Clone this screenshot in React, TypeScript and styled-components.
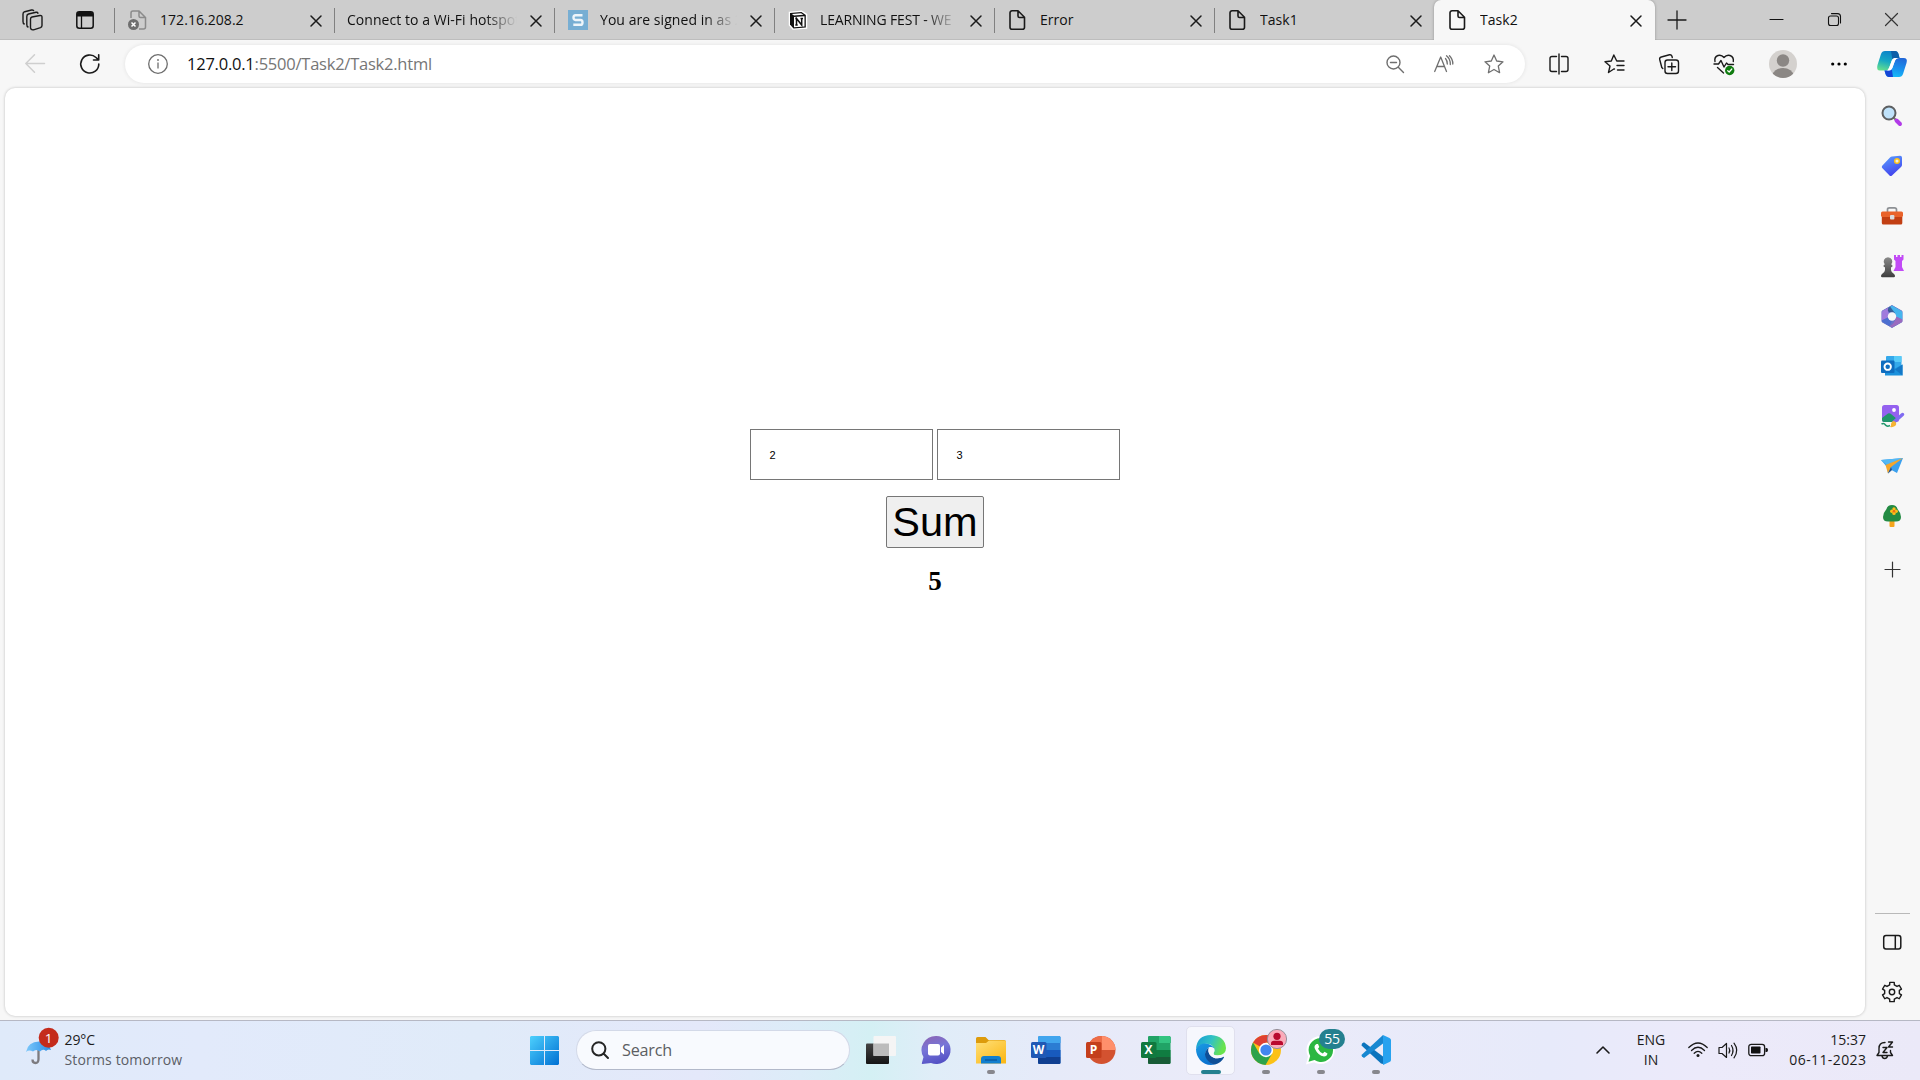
import React from 'react';
import styled, { createGlobalStyle } from 'styled-components';

const GlobalStyle = createGlobalStyle`
  * { box-sizing: border-box; }
  body { margin: 0; background: #f6f6f6; overflow: hidden; }
  svg { display: block; flex: none; overflow: visible; }
`;

const ui = `"Open Sans", "Noto Sans", sans-serif`;

const Screen = styled.div`
  width: 1920px;
  height: 1080px;
  display: flex;
  flex-direction: column;
  font-family: ${ui};
  color: #1b1b1b;
  background: #f7f7f7;
  overflow: hidden;
`;

/* ---------- tab strip ---------- */
const TabStrip = styled.div`
  height: 40px;
  flex: none;
  display: flex;
  background: #cdcdcd;
  box-shadow: inset 0 -1px 0 #bdbdbd;
`;
const StripTools = styled.div`
  width: 114px;
  display: flex;
  align-items: center;
  padding-left: 22px;
  gap: 33px;
`;
const Tab = styled.div<{ $active?: boolean; $bare?: boolean }>`
  width: ${p => (p.$active ? 221 : 220)}px;
  height: 40px;
  display: flex;
  align-items: center;
  padding: 0 ${p => (p.$active ? 13 : 12)}px 0 ${p => (p.$bare ? 13 : 14)}px;
  background: ${p => (p.$active ? '#f7f7f7' : 'linear-gradient(#808080,#808080) 0 8px / 1px 25px no-repeat')};
  ${p => (p.$active ? 'border-radius: 7px 7px 0 0; box-shadow: 0 0 3px rgba(0,0,0,.3); clip-path: inset(0 -4px 0 -4px);' : '')}
`;
const Favicon = styled.div`
  width: 20px;
  height: 20px;
  margin-right: 12px;
`;
const TabTitle = styled.div<{ $fade?: boolean; $tight?: boolean }>`
  flex: 1;
  overflow: hidden;
  white-space: nowrap;
  font-size: 14px;
  line-height: 20px;
  letter-spacing: ${p => (p.$tight ? -0.16 : 0.05)}px;
  color: #101010;
  margin-right: 13px;
  margin-top: -1px;
  ${p => (p.$fade ? 'mask-image: linear-gradient(90deg, #000 calc(100% - 32px), transparent 100%);' : '')}
`;
const CloseSlot = styled.div`
  width: 12px;
  margin: 1px 0 0;
`;
const NewTab = styled.div`
  width: 44px;
  display: grid;
  place-items: center;
`;
const WindowButtons = styled.div`
  margin-left: auto;
  display: flex;
  align-items: center;
  gap: 44.5px;
  padding: 0 22px 1px 0;
`;

/* ---------- toolbar ---------- */
const Toolbar = styled.div`
  height: 48px;
  flex: none;
  display: flex;
  align-items: flex-start;
  padding-top: 5px;
`;
const NavButtons = styled.div`
  width: 125px;
  height: 38px;
  display: flex;
  align-items: center;
  gap: 35px;
  padding-left: 25px;
`;
const Omnibox = styled.div`
  width: 1400px;
  height: 38px;
  border-radius: 19px;
  background: #fff;
  box-shadow: 0 0 4px rgba(0, 0, 0, 0.09);
  display: flex;
  align-items: center;
  padding: 0 21px 0 23px;
`;
const Url = styled.div`
  margin: -1px auto 0 19px;
  font-size: 16.5px;
  line-height: 24px;
  letter-spacing: -0.23px;
  color: #767676;
  white-space: nowrap;
  b { color: #111; font-weight: 400; }
`;
const OmniIcons = styled.div`
  display: flex;
  align-items: center;
  gap: 30px;
`;
const ToolIcons = styled.div`
  height: 38px;
  display: flex;
  align-items: center;
  padding-left: 24px;
  gap: 35px;
`;
const Avatar = styled.div`
  width: 28px;
  height: 28px;
  margin: 0 -1px 0 0;
`;
const MenuSlot = styled.div`
  margin-left: 0;
`;
const CopilotSlot = styled.div`
  margin-left: -5px;
`;

/* ---------- middle ---------- */
const Middle = styled.div`
  height: 932px;
  flex: none;
  display: flex;
  padding-left: 5px;
`;
const Page = styled.main`
  width: 1860px;
  height: 928px;
  background: #fff;
  border-radius: 10px;
  box-shadow: 0 0 3px rgba(0, 0, 0, 0.24);
  display: flex;
  flex-direction: column;
  align-items: center;
  padding-top: 341px;
`;
const Inputs = styled.div`
  display: flex;
  gap: 4px;
`;
const NumberField = styled.div`
  width: 183px;
  height: 51px;
  border: 1px solid #767676;
  padding-left: 18.500px;
  font: 11px/51px "Liberation Sans", Arial, sans-serif;
  color: #000;
`;
const SumButton = styled.button`
  width: 98px;
  height: 52px;
  margin: 16px 0 0;
  padding: 0 0 1px;
  border: 1px solid #767676;
  border-radius: 2px;
  background: #efefef;
  color: #000;
  font: 41.5px/47px "Liberation Sans", Arial, sans-serif;
`;
const Result = styled.h2`
  margin: 18px 0 0;
  font: bold 27px/31px "Liberation Serif", "Times New Roman", serif;
  color: #000;
`;
const Sidebar = styled.aside`
  width: 54px;
  display: flex;
  flex-direction: column;
  align-items: center;
  padding: 2px 0 3px;
`;
const SideItem = styled.div<{ $h?: number }>`
  height: ${p => p.$h ?? 50}px;
  display: grid;
  place-items: center;
`;
const SideRule = styled.div`
  width: 35px;
  height: 1px;
  margin-top: auto;
  margin-bottom: 3px;
  background: #b9b9b9;
`;

/* ---------- taskbar ---------- */
const Taskbar = styled.footer`
  height: 60px;
  flex: none;
  display: flex;
  border-top: 1px solid #b6b8c4;
  background: linear-gradient(90deg, #dfeafa 0, #e2eafb 200px, #e0ebf9 480px, #e4e8fa 700px, #dcecf8 800px, #d4f0f4 870px, #e0edf8 935px, #e6eaf9 1050px, #ebebf9 1250px, #e7eafa 1550px, #eceafa 1700px, #ebe9f8 100%);
`;
const Weather = styled.div`
  width: 517px;
  display: flex;
  padding: 9px 0 0 26px;
`;
const WeatherText = styled.div`
  margin-left: 9.5px;
  font-size: 14px;
  line-height: 20px;
  letter-spacing: 0.15px;
  color: #5b5e66;
  b { display: block; font-weight: 400; color: #1b1b1b; letter-spacing: -0.1px; }
`;
const StartSlot = styled.div`
  width: 59px;
  padding: 15px 0 0 13px;
`;
const SearchBox = styled.div`
  width: 274px;
  height: 40px;
  margin-top: 9px;
  border-radius: 20px;
  background: #f8fafe;
  border: 1px solid #d3d9e8;
  border-bottom-color: #b2b9ca;
  display: flex;
  align-items: center;
  padding-left: 14px;
  gap: 13px;
  font-size: 16.2px;
  color: #5c5e62;
  letter-spacing: -0.2px;
`;
const Apps = styled.div`
  display: flex;
  margin-left: 3px;
`;
const AppCell = styled.div<{ $active?: boolean }>`
  width: 49px;
  height: 49px;
  margin: 5px 3px 0;
  padding-top: 8px;
  display: flex;
  flex-direction: column;
  align-items: center;
  justify-content: space-between;
  border-radius: 5px;
  border: 1px solid ${p => (p.$active ? '#e0e0ee' : 'transparent')};
  background: ${p => (p.$active ? '#f6f7fd' : 'transparent')};
`;
const Indicator = styled.div<{ $kind?: 'run' | 'focus' }>`
  width: ${p => (p.$kind === 'focus' ? 20 : 8)}px;
  height: 4px;
  border-radius: 2px;
  background: ${p => (p.$kind === 'focus' ? '#24808f' : p.$kind ? '#87878d' : 'transparent')};
`;
const Tray = styled.div`
  margin-left: auto;
  display: flex;
  align-items: flex-start;
  padding: 0 26px 0 0;
`;
const TrayIcon = styled.div<{ $top: number; $gap: number }>`
  padding-top: ${p => p.$top}px;
  margin-left: ${p => p.$gap}px;
`;
const TrayText = styled.div<{ $w: number; $align: string; $gap: number }>`
  width: ${p => p.$w}px;
  margin-left: ${p => p.$gap}px;
  padding-top: 9px;
  text-align: ${p => p.$align};
  font-size: 14px;
  line-height: 20px;
  white-space: nowrap;
`;
const DateLine = styled.div`
  letter-spacing: 0.4px;
  margin-right: -0.4px;
`;

const line = (d: string, w = 20, h = 20, c = '#1a1a1a', sw = 1.4) => (
  <svg width={w} height={h} viewBox={`0 0 ${w} ${h}`} fill="none" stroke={c} strokeWidth={sw} strokeLinecap="round" strokeLinejoin="round">
    <path d={d} />
  </svg>
);

const CloseX = () => line('M1 1L11 11M11 1L1 11', 12, 12, '#1a1a1a', 1.5);
const FileIcon = () => line('M4 .8H10L16.500 7.300V17.200A2 2 0 0 1 14.500 19.200H4A2 2 0 0 1 2 17.200V2.800A2 2 0 0 1 4 .8ZM10 1V6A1.500 1.500 0 0 0 11.500 7.500H16.500', 20, 20, '#1a1a1a', 1.6);
const BrokenFile = () => (
  <svg width="20" height="20" viewBox="0 0 20 20" fill="none">
    <path d="M3 8V3A2 2 0 0 1 5 1H11L17.500 7.500V17A2 2 0 0 1 15.500 19H11M11 1V6A1.500 1.500 0 0 0 12.500 7.500H17.500" stroke="#8b8b8b" strokeWidth="1.500" />
    <circle cx="5.500" cy="14.500" r="5.500" fill="#6f6f6f" />
    <path d="M3.500 12.500L7.500 16.500M7.500 12.500L3.500 16.500" stroke="#fff" strokeWidth="1.500" />
  </svg>
);
const SIcon = () => (
  <svg width="20" height="20" viewBox="0 0 20 20">
    <rect width="20" height="20" fill="#77aed3" />
    <path d="M14.500 5.200H7.500Q5.500 5.200 5.500 7.500T7.500 10H12.500Q14.500 10 14.500 12.400T12.500 14.800H5.300" fill="none" stroke="#eef5fa" strokeWidth="2.400" />
  </svg>
);
const NotionIcon = () => (
  <svg width="20" height="20" viewBox="0 0 20 20">
    <path d="M1.500 2.500L13.500 1.200L18.500 4.500V18L5 19L1.500 15Z" fill="#fff" stroke="#fff" strokeWidth="1.500" />
    <path d="M2 3L13.500 2L17.800 5V17.600L5.500 18.500L2 14.500Z" fill="#111" />
    <path d="M3.800 3.900L13 3.200L15.500 4.800L6 5.500Z M6 7L16.500 6.200V16.500L6 17.200Z" fill="#fff" />
    <path d="M8.500 15V8.500L13.700 15V8.500M7.300 8.500H9M12.500 8.500H15M7.300 15H9.700" stroke="#111" strokeWidth="1.500" fill="none" />
  </svg>
);
const Workspaces = () => (
  <svg width="21" height="22" viewBox="0 0 21 22" fill="none" stroke="#1a1a1a" strokeWidth="1.400" strokeLinejoin="round" strokeLinecap="round">
    <path d="M10 8L18 6.500Q20 6.300 20 8.300V16.500Q20 18 18.500 18.600L11.500 20.800Q9 21.300 8.500 19V10Q8.500 8.500 10 8Z" />
    <path d="M6 18Q4.800 17.500 4.800 15.500V7.500Q4.800 5.500 6.500 5L14 3.300Q15.600 3 16 4.200" />
    <path d="M2.200 15Q1 14.500 1 12.500V5Q1 3.300 2.700 2.700L9.500 1Q11 .7 11.600 1.600" />
  </svg>
);
const TabActions = () => (
  <svg width="18" height="18" viewBox="0 0 18 18">
    <rect x=".8" y=".8" width="16.400" height="16.400" rx="2.500" fill="none" stroke="#111" strokeWidth="1.500" />
    <path d="M1 5.500V3Q1 1 3 1H15Q17 1 17 3V5.500Z" fill="#111" />
    <path d="M5.500 5V17" stroke="#111" strokeWidth="1.300" />
  </svg>
);
const starD = 'M10 1L12.700 7L19 7.800L14.300 12.100L15.600 18.700L10 15.500L4.400 18.700L5.700 12.100L1 7.800L7.300 7Z';

const SplitIcon = () => line('M10 0V20M7.500 2.500H3Q1 2.500 1 4.500V15.500Q1 17.500 3 17.500H7.500M12.500 2.500H17Q19 2.500 19 4.500V15.500Q19 17.500 17 17.500H12.500', 20, 20);
const FavIcon = () => line('M10.500 15L9.800 15L4.500 18.500L6 12L1 7.800L7.300 7L9.800 1L12.500 6.500M12.800 7H20M13 11.500H20M13.500 16H20', 20, 20);
const CollIcon = () => line('M8.500 6H17Q19.500 6 19.500 8.500V17Q19.500 19.500 17 19.500H8.500Q6 19.500 6 17V8.500Q6 6 8.500 6ZM12.800 9V16.500M9 12.800H16.500M3.800 14.500L2.800 13.500L.7 5.500Q.3 3.500 2.300 3L10.500 .8Q12.300 .4 13 2.300L13.300 3.500', 20, 20);
const HeartIcon = () => (
  <svg width="20" height="20" viewBox="0 0 20 20" fill="none" stroke="#1a1a1a" strokeWidth="1.400" strokeLinejoin="round" strokeLinecap="round">
    <path d="M1 7.500Q0 3 4 1.500Q7.500 .5 10 3.500Q12.500 .5 16 1.500Q20 3 19.300 7.500M0 10H4.500L7 6.500L10 13L12.500 9L14 10.500H19.500M3.500 13.500L9.500 19" />
    <circle cx="15.700" cy="16.500" r="4.700" fill="#107c10" stroke="none" />
    <path d="M13.700 16.700L15.200 18L17.800 15" stroke="#fff" strokeWidth="1.200" />
  </svg>
);
const AvatarIcon = () => (
  <svg width="28" height="28" viewBox="0 0 28 28">
    <defs><clipPath id="av"><circle cx="14" cy="14" r="14" /></clipPath></defs>
    <circle cx="14" cy="14" r="14" fill="#d4d1ce" />
    <circle cx="14" cy="10.500" r="6.200" fill="#8b8784" />
    <ellipse cx="14" cy="25.500" rx="10.500" ry="7.500" fill="#8b8784" clipPath="url(#av)" />
  </svg>
);
const Copilot = () => (
  <svg width="30" height="28" viewBox="0 0 30 28">
    <defs>
      <linearGradient id="cp1" x1=".5" y1="0" x2=".2" y2="1"><stop offset="0" stopColor="#0b83c9" /><stop offset=".5" stopColor="#16a8c4" /><stop offset="1" stopColor="#66e08c" /></linearGradient>
      <linearGradient id="cp2" x1=".7" y1="0" x2=".4" y2="1"><stop offset="0" stopColor="#2168d8" /><stop offset=".6" stopColor="#1896f0" /><stop offset="1" stopColor="#17bdf7" /></linearGradient>
    </defs>
    <path d="M8 1H18Q20.500 1 21.500 4L22.500 8H18Q15.500 8 14.800 10.500L12 18Q11 20.500 8 20.500H3Q-1 20.500 .5 15L4 4Q5 1 8 1Z" fill="url(#cp1)" />
    <path d="M14 1H18Q20.500 1 21.500 4L22.500 8H18Q16 8 15.400 9.500Z" fill="#0b5ea8" />
    <path d="M22 8H26.500Q31 8 29.500 13L26 24Q25 27 22 27H12Q9.500 27 8.500 24L7.500 20.500H12Q14.500 20.500 15.300 18L18 10.500Q19 8 22 8Z" fill="url(#cp2)" />
    <path d="M7.500 20.500H12Q14 20.500 14.800 19L16 27H12Q9.500 27 8.500 24Z" fill="#1546d6" />
    <path d="M17.800 8H20.500Q18.800 8.500 18 10.800L15.300 18Q14.500 20.500 12 20.500H9.500Q11.500 20 12.300 17.500L14.800 10.500Q15.500 8 17.800 8Z" fill="#fff" />
  </svg>
);

/* sidebar drawings */
const SideSearch = () => (
  <svg width="22" height="22" viewBox="0 0 22 22">
    <path d="M12.500 12.500L16 16" stroke="#777" strokeWidth="2" />
    <path d="M15.500 15.500L19 19" stroke="#b23be8" strokeWidth="4" strokeLinecap="round" />
    <circle cx="8" cy="8" r="6.500" fill="#bfe2fa" stroke="#5d5f61" strokeWidth="2" />
  </svg>
);
const SideTag = () => (
  <svg width="22" height="22" viewBox="0 0 22 22">
    <defs><linearGradient id="tg" x2=".4" y2="1"><stop stopColor="#5aa2ff" /><stop offset="1" stopColor="#4346ee" /></linearGradient></defs>
    <path d="M11 1.500L19 .8Q21 .7 21 2.700V10Q21 11 20 12L11 20.500Q9.700 21.500 8.500 20.500L1.200 13Q.2 12 1.200 10.800L9 2.500Q10 1.500 11 1.500Z" fill="url(#tg)" />
    <circle cx="16" cy="6" r="2.300" fill="#f1f0e0" stroke="#ffc217" strokeWidth="1.500" />
  </svg>
);
const SideToolbox = () => (
  <svg width="22" height="18" viewBox="0 1 22 18">
    <path d="M6.500 6V3.500Q6.500 1.800 8.500 1.800H13.500Q15.500 1.800 15.500 3.500V6" fill="none" stroke="#8d9094" strokeWidth="1.700" />
    <rect x=".8" y="10" width="20.500" height="8.500" rx="1.500" fill="#c23f13" />
    <rect x="0" y="5.500" width="22" height="5.500" rx="1.500" fill="#e9632b" />
    <rect x="9" y="9" width="4.400" height="4.500" rx="1" fill="#dadde0" />
  </svg>
);
const SideChess = () => (
  <svg width="24" height="24" viewBox="0 0 24 24">
    <defs><linearGradient id="pn" y2="1" x2="0"><stop stopColor="#8a8a8a" /><stop offset="1" stopColor="#3e3e3e" /></linearGradient></defs>
    <path d="M14 1H16V3H17.500V1H20V3H21.500V1H23.500V5.500L22 7V13L24 17H13.500L15.500 13V7L14 5.500Z" fill="#c24bf6" />
    <path d="M8 3.200A4.300 4.300 0 0 1 11.200 10.400Q12.500 10.700 12.500 12T11 13.300V16Q11 18 14 20Q15 21 15 22Q15 23.200 13.800 23.200H2.200Q1 23.200 1 22Q1 21 2 20Q5 18 5 16V13.300Q3.500 13.300 3.500 12T4.800 10.400A4.300 4.300 0 0 1 8 3.200Z" fill="url(#pn)" />
  </svg>
);
const Side365 = () => (
  <svg width="22" height="23" viewBox="0 0 22 23">
    <path d="M11 .5L21 6.200V16.800L11 22.500L1 16.800V6.200Z" fill="#6b74c8" stroke="#6b74c8" strokeLinejoin="round" />
    <path d="M11 .5L20.500 6Q21.300 6.500 21.300 7.500V14.500L15 11.500Q15 7.500 11 7.300L6 4Q9 1 11 .5Z" fill="#45b5ee" />
    <path d="M11 .5L5 4.200Q8 8 12 7.300L14.500 8.800L9 1.500Z" fill="#31477f" opacity=".75" />
    <path d="M.8 15.500V7.500Q.8 6.500 1.500 6L7.500 2.500Q6 6 8 8.500Q6.500 10 7 12.500Z" fill="#a07bdc" />
    <path d="M.8 15.500L7 12.500Q8 15.700 11 15.700L8.500 21L1.500 17Z" fill="#4c6fd0" />
    <path d="M21.300 14.500V16Q21.300 16.700 20.500 17.200L11 22.500L8.500 21Q14 19 15 11.500Z" fill="#9b6bbf" />
    <circle cx="11" cy="11.500" r="4.200" fill="#f7f7f7" />
  </svg>
);
const SideOutlook = () => (
  <svg width="22" height="22" viewBox="0 0 22 22">
    <rect x="5" y="1" width="15.500" height="15" rx="1" fill="#35a9eb" />
    <path d="M13 1H20.500V7H13Z" fill="#57cbf8" />
    <path d="M4 10L13 14L21.500 9.500V20.500H4Z" fill="#1b91dc" />
    <path d="M14 14.500L21.500 9.500V20.500Z" fill="#1478c7" />
    <rect x="0" y="5.500" width="13.500" height="12.500" rx="1" fill="#0f6dbf" />
    <circle cx="6.700" cy="11.700" r="3.200" fill="none" stroke="#fff" strokeWidth="1.900" />
  </svg>
);
const SideImage = () => (
  <svg width="24" height="24" viewBox="0 0 24 24">
    <rect x="2" y="1" width="17" height="17" rx="2.500" fill="#9461ef" />
    <path d="M2 14L8 9.500Q9.500 8.700 11 10L17 15V18H4Q2 18 2 16Z" fill="#20966b" />
    <circle cx="14" cy="6" r="1.900" fill="#fff" />
    <path d="M14 18L22.500 10.500" stroke="#806bf1" strokeWidth="3.500" strokeLinecap="round" />
    <path d="M10 23Q11.500 22 11 20Q12 16 15 17.500Q17.500 20 15 22Q13 23.500 10 23Z" fill="#f5b434" />
    <path d="M1.500 20Q4 18.500 5.500 21Q7 23 10 21.500" stroke="#20966b" strokeWidth="1.500" fill="none" />
  </svg>
);
const SidePlane = () => (
  <svg width="22" height="18" viewBox="0 0 22 18">
    <path d="M0 3L22 1L16 16L10.500 13L7 16.500L6 10Z" fill="#3ba0ee" />
    <path d="M0 3L22 1L6 8Z" fill="#54b8f4" />
    <path d="M4.500 8L22 1L10 10L7 16.500Z" fill="#f4a62b" />
    <path d="M10 10L7 16.500L11 13Z" fill="#26518c" />
  </svg>
);
const SideTree = () => (
  <svg width="20" height="24" viewBox="0 0 20 24">
    <rect x="7.500" y="15" width="5" height="8" rx="1" fill="#f5a51d" />
    <path d="M10 1Q14.500 1 15.500 5Q19 9 19 13Q19 17.500 14 17.500H6Q1 17.500 1 13Q1 9 4.500 5Q5.500 1 10 1Z" fill="#238b43" />
    <g fill="#ffbd1a"><circle cx="12" cy="5" r="1.700" /><circle cx="12" cy="9.400" r="1.700" /><circle cx="9.800" cy="7.200" r="1.700" /><circle cx="14.200" cy="7.200" r="1.700" /></g>
    <circle cx="12" cy="7.200" r="1.300" fill="#ee6b17" />
  </svg>
);
const Gear = () => {
  const pts: string[] = [];
  for (let i = 0; i < 6; i++) {
    const at = (deg: number, r: number) => {
      const a = ((i * 60 + deg) * Math.PI) / 180;
      return `${(10 + r * Math.sin(a)).toFixed(2)} ${(10 - r * Math.cos(a)).toFixed(2)}`;
    };
    pts.push(at(-13, 9.9), at(13, 9.9), at(18, 7.5), at(42, 7.5));
  }
  return (
    <svg width="20" height="20" viewBox="0 0 20 20" fill="none" stroke="#1a1a1a" strokeWidth="1.400" strokeLinejoin="round">
      <path d={`M${pts.join('L')}Z`} /><circle cx="10" cy="10" r="2.700" />
    </svg>
  );
};

/* taskbar drawings */
const Umbrella = () => (
  <svg width="29" height="40" viewBox="0 0 29 40">
    <defs><linearGradient id="um"><stop stopColor="#7cc8fb" /><stop offset="1" stopColor="#2b8de6" /></linearGradient></defs>
    <path d="M12.500 12V29Q12.500 33 9.500 33Q6.500 33 6.500 29.500" stroke="#7d7c80" strokeWidth="2.300" fill="none" />
    <path d="M0 22Q2 11.500 13 11.500Q23 11.500 25 20Q22 18.500 20 21Q17 18.500 14 21.500Q10 18.500 7 21.500Q3 19.500 0 22Z" fill="url(#um)" />
    <circle cx="22.700" cy="7.800" r="10" fill="#c42b1c" />
    <text x="22.700" y="12.800" fontSize="13.500" fill="#fff" textAnchor="middle" fontFamily="Open Sans">1</text>
  </svg>
);
const WinLogo = () => (
  <svg width="29" height="29" viewBox="0 0 29 29">
    <defs><linearGradient id="wl" gradientUnits="userSpaceOnUse" x1="0" y1="0" x2="29" y2="29"><stop stopColor="#4dd0fd" /><stop offset="1" stopColor="#0070d3" /></linearGradient></defs>
    <path d="M1 0H14V14H0V1ZM15 0H28L29 1V14H15ZM0 15H14V29H1L0 28ZM15 15H29V28L28 29H15Z" fill="url(#wl)" />
  </svg>
);
const TaskView = () => (
  <svg width="30" height="30" viewBox="0 0 30 30">
    <defs><linearGradient id="tv" y2="1" x2="0"><stop stopColor="#444" /><stop offset="1" stopColor="#151515" /></linearGradient></defs>
    <rect x="0" y="8.500" width="23" height="20.500" rx="1" fill="url(#tv)" />
    <rect x="7.500" y="1" width="22.500" height="20" rx="1" fill="#f5f5f5" />
    <path d="M7.500 8.500H23V21H7.500Z" fill="#bcbcbc" />
  </svg>
);
const Chat = () => (
  <svg width="30" height="30" viewBox="0 0 30 30">
    <defs><linearGradient id="ch" x1=".2" y1="0" x2=".5" y2="1"><stop stopColor="#8b65b5" /><stop offset=".45" stopColor="#7776d8" /><stop offset="1" stopColor="#5350c4" /></linearGradient></defs>
    <path d="M15 1A14.300 14 0 1 1 10 28L1.500 29Q.3 29 1 27.500L2.500 22A14.300 14 0 0 1 15 1Z" fill="url(#ch)" />
    <rect x="7" y="9" width="12" height="11.500" rx="2" fill="#fff" /><path d="M20 12.500L23 10V19.500L20 17Z" fill="#fff" />
  </svg>
);
const Explorer = () => (
  <svg width="30" height="30" viewBox="0 0 30 30">
    <defs><linearGradient id="fe" x2=".8" y2="1"><stop stopColor="#ffe079" /><stop offset="1" stopColor="#fbb919" /></linearGradient></defs>
    <path d="M0 3.500Q0 2 1.500 2H9.500L12.500 5H28Q30 5 30 7V12H0Z" fill="#dd9b0b" />
    <path d="M0 8H10L13 5.500H28.500Q30 5.500 30 7V28.500H0Z" fill="url(#fe)" />
    <path d="M5 28.500V24Q5 21 8 21H22Q25 21 25 24V28.500Z" fill="#117fcf" /><path d="M9 25H21" stroke="#09559c" strokeWidth="1.300" />
  </svg>
);
const Office = ({ letter, c, d }: { letter: string; c: string[]; d: string }) => (
  <svg width="30" height="30" viewBox="0 0 30 30">
    {letter === 'P' ? (
      <g><circle cx="15.500" cy="15" r="14" fill={c[2]} /><path d="M15.500 1A14 14 0 0 1 29.500 15H15.500Z" fill={c[1]} /><path d="M15.500 1V15H1.500A14 14 0 0 1 15.500 1Z" fill={c[0]} /></g>
    ) : (
      <g><rect x="7" y="1" width="22.500" height="28" rx="1.500" fill={c[1]} />
        <path d="M7 2.500Q7 1 8.500 1H28Q29.500 1 29.500 2.500V8H7Z" fill={c[0]} />
        <rect x="7" y="15" width="22.500" height="7" fill={c[2]} /><path d="M7 22H29.500V27.500Q29.500 29 28 29H8.500Q7 29 7 27.500Z" fill={c[3]} />
        {letter === 'X' && <path d="M18 1H28Q29.500 1 29.500 2.500V8H18Z" fill="#33c481" />}</g>
    )}
    <rect x="0" y="7" width="15.500" height="16" rx="1.500" fill={d} />
    <text x="7.500" y="19.300" fontSize="12" fontWeight="700" fill="#fff" textAnchor="middle" fontFamily="Open Sans">{letter}</text>
  </svg>
);
const Edge = () => (
  <svg width="30" height="30" viewBox="0 0 30 30">
    <defs>
      <linearGradient id="e1" x2="1" y2=".3"><stop stopColor="#159bd7" /><stop offset=".55" stopColor="#32c2c4" /><stop offset="1" stopColor="#69e34d" /></linearGradient>
      <linearGradient id="e2" x2=".4" y2="1"><stop stopColor="#1a9be3" /><stop offset="1" stopColor="#0b72cf" /></linearGradient>
    </defs>
    <path d="M0 14Q1 0 15 0Q29 1 30 13Q30 20 22 20.500Q17 20.500 17.500 18Q19 16 18 13Q15 8 8 9Q2 10 0 14Z" fill="url(#e1)" />
    <path d="M0 14Q3 8 10 8.500Q17 9.500 18.500 14Q15 10.500 11.500 13.500Q7 19 12 25Q14 28 19 29.500Q10 31.500 4 25Q0 20 0 14Z" fill="url(#e2)" />
    <path d="M11.500 13.500Q7 19 10.500 24Q14 29 19 29.500Q25 28 28 22.500Q28 21.500 27 22Q19 25.500 14 20Q11.500 16.500 13 13Z" fill="#0e4f98" />
    <path d="M12.800 13Q15 11.500 18.300 13.500Q19 16 17.700 17.700Q17 20 20 20.400Q23 20.600 25.500 19.800Q27 20.500 27 22Q19 25.500 14 20Q11.500 16.500 12.800 13Z" fill="#f6f7fd" />
  </svg>
);
const Chrome = () => (
  <svg width="30" height="30" viewBox="0 0 30 30">
    <circle cx="15" cy="15" r="15" fill="#fbc116" />
    <path d="M15 15L2 7.500A15 15 0 0 1 28 7.500H15Z" fill="#df4032" />
    <path d="M2 7.500A15 15 0 0 0 14.500 30L21 18.800L15 15L8.500 18.800Z" fill="#2ca24c" />
    <circle cx="15" cy="15" r="7.200" fill="#fff" /><circle cx="15" cy="15" r="5.600" fill="#4286ef" />
    <circle cx="26" cy="4" r="9.600" fill="#faabba" stroke="#96909a" strokeWidth="1" />
    <circle cx="26" cy="1.300" r="3.600" fill="#b9092d" /><path d="M20 10V8.500Q20 5.800 23 5.800H29Q32 5.800 32 8.500V10Z" fill="#b9092d" />
  </svg>
);
const WhatsApp = () => (
  <svg width="30" height="30" viewBox="0 0 30 30">
    <path d="M14.500 1A14 14 0 1 1 8 27.300L0 29.500L2 21.500A14 14 0 0 1 14.500 1Z" fill="#fff" />
    <path d="M14.500 3A12 12 0 1 1 8.500 25L2.500 26.800L4.200 21A12 12 0 0 1 14.500 3Z" fill="#2cb742" />
    <path d="M10.500 9Q7.500 10.500 9 14Q12 20.500 18 21.500Q21 21.500 21.500 18.500L18.500 16.800L16.800 18.500Q13.500 17 12 13.800L13.300 12L12 9Z" fill="#fff" />
    <rect x="13" y="-6" width="26" height="20" rx="10" fill="#24808f" />
    <text x="26" y="9.200" fontSize="14" fill="#fff" textAnchor="middle" fontFamily="Open Sans" letterSpacing="-.3">55</text>
  </svg>
);
const Code = () => (
  <svg width="30" height="30" viewBox="0 0 30 30">
    <path d="M1 8.500L3 7.200L22 21.500V29L20 28.500L.5 10.500Z" fill="#0b74bd" />
    <path d="M22 0V8.500L3 23L1 21.500Q0 20.500 1 19.500Z" fill="#1687d1" />
    <path d="M22 0L28.500 3Q30 3.800 30 5V25Q30 26.300 28.500 27L22 30Z" fill="#27a2ef" />
  </svg>
);
const Wifi = () => (
  <svg width="20" height="16" viewBox="0 0 20 16" fill="none" stroke="#1a1a1a" strokeWidth="1.300" strokeLinecap="round">
    <path d="M.8 5.500Q10-3.500 19.200 5.500M3.500 8.500Q10 2 16.500 8.500M6.200 11.200Q10 7.500 13.800 11.200" /><circle cx="10" cy="13.500" r="1.500" fill="#1a1a1a" stroke="none" />
  </svg>
);
const Battery = () => (
  <svg width="20" height="14" viewBox="0 0 20 14">
    <rect x=".8" y="1.300" width="15.800" height="11.400" rx="2.500" fill="none" stroke="#1a1a1a" strokeWidth="1.300" />
    <rect x="3" y="3.500" width="9.500" height="7" rx=".7" fill="#111" /><path d="M17.500 5H18.500Q20 5 20 7T18.500 9H17.500Z" fill="#111" />
  </svg>
);

const tabs: { title: string; icon?: React.ReactNode; fade?: boolean; tight?: boolean; active?: boolean }[] = [
  { title: '172.16.208.2', icon: <BrokenFile /> },
  { title: 'Connect to a Wi-Fi hotspot', fade: true },
  { title: 'You are signed in as 2', icon: <SIcon />, fade: true },
  { title: 'LEARNING FEST - WE', icon: <NotionIcon />, fade: true, tight: true },
  { title: 'Error', icon: <FileIcon /> },
  { title: 'Task1', icon: <FileIcon /> },
  { title: 'Task2', icon: <FileIcon />, active: true },
];

const sideIcons = [SideSearch, SideTag, SideToolbox, SideChess, Side365, SideOutlook, SideImage, SidePlane, SideTree];

const apps: { icon: React.ReactNode; kind?: 'run' | 'focus' }[] = [
  { icon: <TaskView /> },
  { icon: <Chat /> },
  { icon: <Explorer />, kind: 'run' },
  { icon: <Office letter="W" c={['#41a5ee', '#2b7cd3', '#185abd', '#103f91']} d="#2059b5" /> },
  { icon: <Office letter="P" c={['#ed6c47', '#ff8f6b', '#d35230']} d="#c43e1c" /> },
  { icon: <Office letter="X" c={['#21a366', '#21a366', '#107c41', '#185c37']} d="#10793f" /> },
  { icon: <Edge />, kind: 'focus' },
  { icon: <Chrome />, kind: 'run' },
  { icon: <WhatsApp />, kind: 'run' },
  { icon: <Code />, kind: 'run' },
];

export default function App() {
  return (
    <Screen>
      <GlobalStyle />
      <TabStrip>
        <StripTools><Workspaces /><TabActions /></StripTools>
        {tabs.map(t => (
          <Tab key={t.title} $active={t.active} $bare={!t.icon}>
            {t.icon && <Favicon>{t.icon}</Favicon>}
            <TabTitle $fade={t.fade} $tight={t.tight}>{t.title}</TabTitle>
            <CloseSlot><CloseX /></CloseSlot>
          </Tab>
        ))}
        <NewTab>{line('M9 0V18M0 9H18', 18, 18, '#1a1a1a', 1.3)}</NewTab>
        <WindowButtons>
          {line('M0 6.500H13', 13, 13, '#111', 1.1)}
          {line('M2.500 3H8.500Q10.500 3 10.500 5V10.500Q10.500 12.500 8.500 12.500H2.500Q.5 12.500 .5 10.500V5Q.5 3 2.500 3ZM3.500 .6H9.500Q12.500 .6 12.500 3.600V10', 13, 13, '#111', 1.1)}
          {line('M0.500 .5L12.500 12.500M12.500 .5L.5 12.500', 13, 13, '#333', 1.2)}
        </WindowButtons>
      </TabStrip>

      <Toolbar>
        <NavButtons>
          {line('M19.500 9.500H.8M9.500 .8L.8 9.500L9.500 18.200', 20, 20, '#cfcfcf', 1.5)}
          {line('M18.800 10A9 9 0 1 1 16 3.500L18.500 5.800M18.700 .8V6H13.500', 20, 20, '#1a1a1a', 1.6)}
        </NavButtons>
        <Omnibox>
          <svg width="20" height="20" viewBox="0 0 20 20" fill="none" stroke="#6d6d6d" strokeWidth="1.300">
            <circle cx="10" cy="10" r="9.300" /><path d="M10 8.500V14.500" /><circle cx="10" cy="6" r=".9" fill="#6d6d6d" stroke="none" />
          </svg>
          <Url><b>127.0.0.1</b>:5500/Task2/Task2.html</Url>
          <OmniIcons>
            {line('M7.500 1A6.500 6.500 0 1 1 7.500 14A6.500 6.500 0 0 1 7.500 1M12.300 12.300L17.500 17.500M4.500 7.500H10.500', 18, 18, '#6f6f6f', 1.4)}
            {line('M.7 16.500L6.700 2L12.500 16.500M2.800 11.500H10.500M11.500 3.500Q13.500 6 13.300 9M12.500 .8Q16.500 4 16.300 9.500M15.500 .8Q19 4.500 18.800 9', 20, 18, '#6f6f6f', 1.3)}
            {line(starD, 20, 20, '#6f6f6f', 1.3)}
          </OmniIcons>
        </Omnibox>
        <ToolIcons>
          <SplitIcon /><FavIcon /><CollIcon /><HeartIcon />
          <Avatar><AvatarIcon /></Avatar>
          <MenuSlot>
            <svg width="16" height="4" viewBox="0 0 16 4"><circle cx="1.700" cy="2" r="1.600" /><circle cx="8" cy="2" r="1.600" /><circle cx="14.300" cy="2" r="1.600" /></svg>
          </MenuSlot>
          <CopilotSlot><Copilot /></CopilotSlot>
        </ToolIcons>
      </Toolbar>

      <Middle>
        <Page>
          <Inputs><NumberField>2</NumberField><NumberField>3</NumberField></Inputs>
          <SumButton>Sum</SumButton>
          <Result>5</Result>
        </Page>
        <Sidebar>
          {sideIcons.map((I, i) => <SideItem key={i} $h={i === 0 ? 51 : 50}><I /></SideItem>)}
          <SideItem $h={57}>{line('M7.500 0V15M0 7.500H15', 15, 15, '#333', 1.2)}</SideItem>
          <SideRule />
          <SideItem>{line('M3 2.500H15.500Q17.800 2.500 17.800 5V13.500Q17.800 16 15.500 16H3Q.7 16 .7 13.500V5Q.7 2.500 3 2.500ZM12.300 2.500V16', 18, 18, '#1a1a1a', 1.5)}</SideItem>
          <SideItem><Gear /></SideItem>
        </Sidebar>
      </Middle>

      <Taskbar>
        <Weather>
          <Umbrella />
          <WeatherText><b>29°C</b>Storms tomorrow</WeatherText>
        </Weather>
        <StartSlot><WinLogo /></StartSlot>
        <SearchBox>
          {line('M7.800 1.200A6.600 6.600 0 1 1 7.800 14.400A6.600 6.600 0 0 1 7.800 1.200M12.500 12.500L17 17', 18, 18, '#252525', 2)}
          Search
        </SearchBox>
        <Apps>
          {apps.map((a, i) => (
            <AppCell key={i} $active={a.kind === 'focus'}>{a.icon}<Indicator $kind={a.kind} /></AppCell>
          ))}
        </Apps>
        <Tray>
          <TrayIcon $top={25} $gap={0}>{line('M1 7L7 1L13 7', 14, 8, '#1a1a1a', 1.6)}</TrayIcon>
          <TrayText $w={40} $align="center" $gap={21}>ENG<br />IN</TrayText>
          <TrayIcon $top={21} $gap={17}><Wifi /></TrayIcon>
          <TrayIcon $top={21} $gap={10}>{line('M1 5.500H4L8.500 1.500V15.500L4 11.500H1ZM11 6Q12.500 8.500 11 11M13.500 3.500Q16.500 8.500 13.500 13.500M16 1.200Q21.500 8.500 16 15.800', 20, 17, '#1a1a1a', 1.2)}</TrayIcon>
          <TrayIcon $top={22} $gap={10}><Battery /></TrayIcon>
          <TrayText $w={88} $align="right" $gap={10}>15:37<DateLine>06-11-2023</DateLine></TrayText>
          <TrayIcon $top={20} $gap={10}>
            {line('M9 1.500Q3 1.500 3 7.500V11.500L1 14.500H16.500L14.500 11.500V9.500M6 15Q6.500 17.500 8.700 17.500T11.500 15M7 6.500H11L7 11.500H11M12.500 1H16.500L12.500 6H16.500', 18, 18, '#1a1a1a', 1.4)}
          </TrayIcon>
        </Tray>
      </Taskbar>
    </Screen>
  );
}
